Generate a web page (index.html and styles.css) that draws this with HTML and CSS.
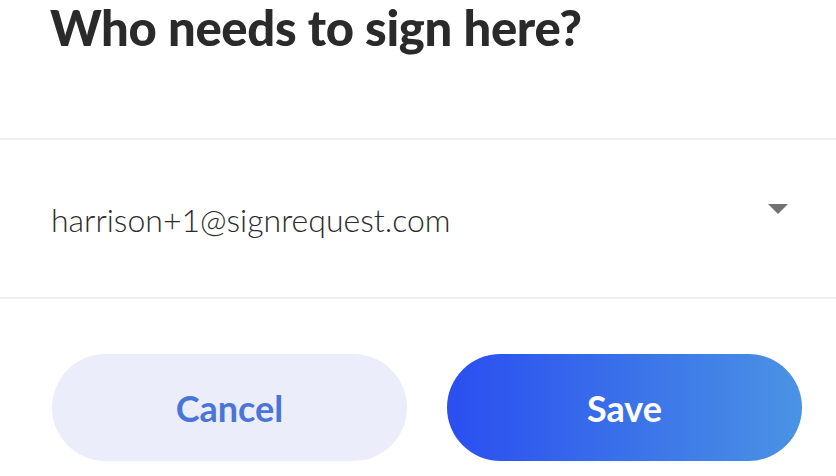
FILE: index.html
```html
<!DOCTYPE html>
<html lang="en">
<head>
<meta charset="utf-8">
<title>Who needs to sign here?</title>
<link rel="stylesheet" href="styles.css">
</head>
<body>
<div class="dialog">
  <h1 class="title">Who needs to sign here?</h1>
  <div class="select-row">
    <span class="select-value">harrison+1@signrequest.com</span>
    <svg class="caret" width="20" height="10" viewBox="0 0 20 10" aria-hidden="true"><path d="M0 0H20L10 10Z" fill="#727272"/></svg>
  </div>
  <div class="actions">
    <button class="btn btn-cancel">Cancel</button>
    <button class="btn btn-save">Save</button>
  </div>
</div>
</body>
</html>
```
FILE: styles.css
```css
html, body {
  margin: 0;
  padding: 0;
  background: #ffffff;
}
body {
  font-family: Lato, "Open Sans", sans-serif;
  width: 836px;
  height: 476px;
  overflow: hidden;
}
.dialog {
  display: flex;
  flex-direction: column;
}
.title {
  margin: 0;
  padding: 1px 0 0 50px;
  height: 138px;
  box-sizing: border-box;
  font-size: 49px;
  line-height: 52px;
  font-weight: 900;
  color: #2a2a2a;
  letter-spacing: -0.3px;
}
.select-row {
  border-top: 2px solid #efefef;
  border-bottom: 2px solid #efefef;
  height: 161px;
  box-sizing: border-box;
  display: flex;
  align-items: center;
  padding: 0 48px 0 51px;
  justify-content: space-between;
}
.select-value {
  font-family: "Lato Light", Lato, sans-serif;
  font-size: 32px;
  font-weight: 300;
  color: #2b2b2b;
  margin-top: 1px;
}
.caret {
  margin-top: -20px;
}
.actions {
  display: flex;
  gap: 40px;
  padding: 55px 34px 0 52px;
}
.btn {
  flex: 1;
  height: 107px;
  border: none;
  border-radius: 54px;
  font-family: Lato, "Open Sans", sans-serif;
  font-size: 36px;
  font-weight: 700;
  cursor: pointer;
  padding: 0;
}
.btn-cancel {
  background: #ebeefa;
  color: #4a74d8;
}
.btn-save {
  background: linear-gradient(90deg, #2a4ef0 0%, #4a93e4 100%);
  color: #ffffff;
}
```
